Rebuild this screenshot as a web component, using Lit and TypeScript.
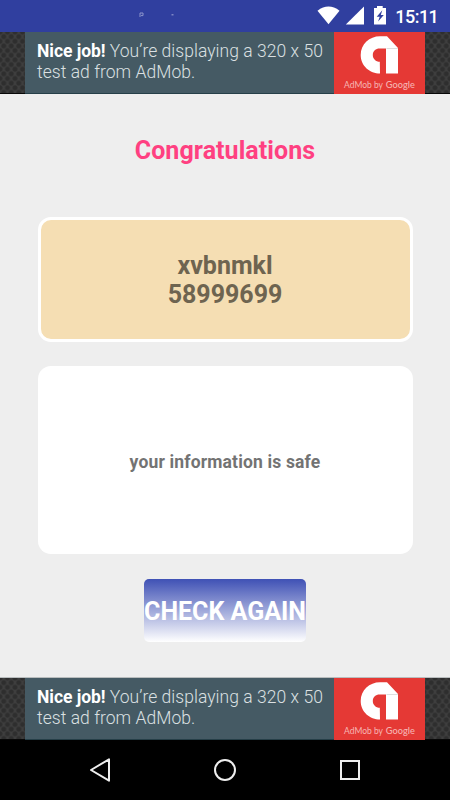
import { LitElement, html, css, svg } from "lit";
import { customElement } from "lit/decorators.js";

@customElement("status-bar")
class StatusBar extends LitElement {
  static styles = css`
    :host { display: block; height: 32px; background: #303f9f; }
    .icons { display: block; }
    .clock { font: 500 18px Roboto, sans-serif; fill: #fff; }
  `;
  render() {
    return html`<svg class="icons" width="450" height="32" viewBox="0 0 450 32">
      <path d="M140 17v-4h3v2.600h-2" fill="none" stroke="#8c95cb" stroke-width="1" />
      <rect x="171.500" y="14" width="2" height="1.500" fill="#7c86c4" />
      <path d="M317.500 10.700Q328.500 2.300 339.500 10.700L328.500 24.300Z" fill="#fff" />
      <path d="M364 6.500V24.500H345.800Z" fill="#fff" />
      <path d="M377 6h5.700v2h3.300v16.500h-12V8h3z" fill="#fff" />
      <path d="M382.300 10.200l-5.600 6.600h3l-1.600 4.700 5.700-6.500h-3z" fill="#303f9f" />
      <text class="clock" x="395.300" y="23" textLength="43.500">15:11</text>
    </svg>`;
  }
}

@customElement("ad-banner")
class AdBanner extends LitElement {
  static styles = css`
    :host {
      display: flex;
      justify-content: center;
      box-sizing: border-box;
      height: 62px;
      background-color: #3e3e3e;
      background-image: radial-gradient(circle, #2e2e2e 0 1.900px, transparent 3px),
        radial-gradient(circle, #2e2e2e 0 1.900px, transparent 3px);
      background-size: 7.500px 9.300px;
      background-position: 0 0, 3.750px 4.650px;
      box-shadow: inset 0 -1px #080808;
    }
    .copy {
      box-sizing: border-box;
      width: 309px;
      padding: 9px 0 0 12px;
      background: #455a64;
      color: #dbe0e2;
      font: 300 17.500px/21px Roboto, sans-serif;
      letter-spacing: 0.04px;
      white-space: nowrap;
      box-shadow: inset 0 -1px #263f48;
    }
    .lead { font-weight: 700; color: #fff; letter-spacing: -0.05px; }
    .logo { display: block; background: #e53935; }
    .brand { font: 400 9.800px Lato, sans-serif; fill: #f6b5b3; }
    .google { font-weight: 500; }
  `;
  render() {
    return html`<div class="copy"><span class="lead">Nice job!</span> You’re displaying a 320 x 50<br />test ad from AdMob.</div>
      <svg class="logo" width="91" height="62" viewBox="0 0 91 62">
        <path d="M46 41.500C36 41.500 26.700 34 26.700 23S35.500 4.200 46 4.200H53L64 16V41.500H52V16.500H45.500C41.800 16.500 38.800 19.100 38.800 23S41.800 29.800 45.800 29.800Z" fill="#fff" />
        <path d="M52.500 16.500H64" stroke="#dedede" stroke-width="1" />
        <text class="brand" x="10" y="55.500" textLength="39" lengthAdjust="spacingAndGlyphs">AdMob by</text>
        <text class="brand google" x="51.800" y="55.500" textLength="29" lengthAdjust="spacingAndGlyphs">Google</text>
      </svg>`;
  }
}

@customElement("nav-bar")
class NavBar extends LitElement {
  static styles = css`
    :host { display: flex; height: 60px; padding: 0 37px; box-sizing: border-box; background: #000; align-items: center; justify-content: space-around; }
    .key { width: 30px; height: 30px; fill: none; stroke: #eee; stroke-width: 2; }
  `;
  key(shape: unknown) {
    return html`<svg class="key" viewBox="0 0 30 30">${shape}</svg>`;
  }
  render() {
    return html`${this.key(svg`<path d="M24 4.300V25.700L6 15Z" stroke-linejoin="round" />`)}
    ${this.key(svg`<circle cx="15" cy="15" r="10" />`)}
    ${this.key(svg`<rect x="6" y="6" width="18" height="18" />`)}`;
  }
}

@customElement("app-root")
class AppRoot extends LitElement {
  static styles = css`
    :host { display: flex; flex-direction: column; width: 450px; height: 800px; overflow: hidden; background: #eee; font-family: Roboto, sans-serif; }
    .content { flex: 1; display: flex; flex-direction: column; align-items: center; box-sizing: border-box; border-bottom: 1px solid #b9bdbe; }
    .title { margin: 42px 0 0; font-size: 25px; line-height: 29px; font-weight: 700; letter-spacing: 0.07px; color: #ff4081; white-space: nowrap; }
    .card { box-sizing: border-box; width: 375px; border-radius: 13px; display: flex; align-items: center; justify-content: center; text-align: center; font-weight: 700; }
    .result { height: 125px; margin-top: 52px; border: 3px solid #fff; background: #f5deb3; color: #6e6450; font-size: 25px; line-height: 29px; }
    .message { height: 188px; margin-top: 24px; background: #fff; color: #737373; font-size: 17.500px; letter-spacing: 0.16px; padding-top: 3px; }
    .again { box-sizing: border-box; width: 162px; height: 63px; margin: 25px 0 0; padding: 2px 0 0; border: 0; border-radius: 5px; display: flex; align-items: center; justify-content: center; background: linear-gradient(#3f51b5, #fff); color: #fff; font: 700 25px Roboto, sans-serif; white-space: nowrap; }
  `;
  render() {
    return html`<status-bar></status-bar>
      <ad-banner></ad-banner>
      <main class="content">
        <h1 class="title">Congratulations</h1>
        <div class="card result"><div>xvbnmkl<br />58999699</div></div>
        <div class="card message">your information is safe</div>
        <button class="again">CHECK AGAIN</button>
      </main>
      <ad-banner></ad-banner>
      <nav-bar></nav-bar>`;
  }
}
